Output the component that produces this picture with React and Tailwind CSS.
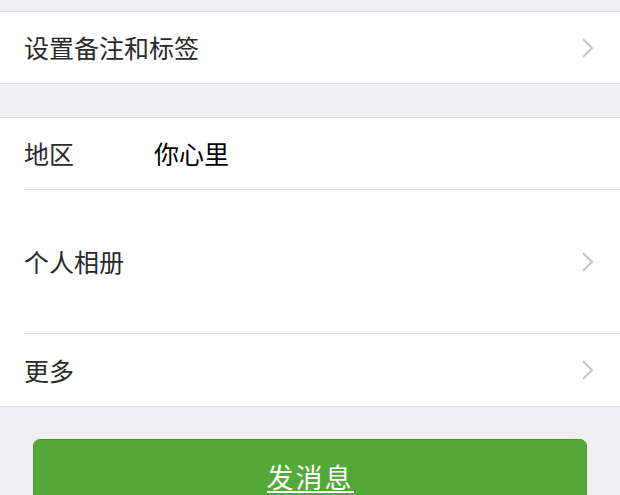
import React from "react";

function Chevron() {
  return (
    <svg width="16" height="22" viewBox="0 0 16 22" fill="none" className="shrink-0">
      <path d="M3 2l9 9-9 9" stroke="#c7c7cc" strokeWidth="2.2" />
    </svg>
  );
}

function Row({ label, value, arrow, tall, divider }) {
  return (
    <div className="pl-6">
      <div
        className={`flex items-center pr-6 ${tall ? "h-[144px]" : "h-[72px]"} ${
          divider ? "border-b border-[#dadadf]" : ""
        }`}
      >
        <span className="min-w-[130px] shrink-0 whitespace-nowrap text-[#2a2a2a]">{label}</span>
        <span className="flex-1 text-black">{value}</span>
        {arrow && <Chevron />}
      </div>
    </div>
  );
}

export default function App() {
  return (
    <div
      className="min-h-[495px] bg-[#efeff4] text-[25px] leading-none"
      style={{ fontFamily: '"Noto Sans CJK SC", "Liberation Sans", sans-serif' }}
    >
      <div className="h-[11px]" />
      <section className="bg-white border-y border-[#d9d9de]">
        <div className="pl-6">
          <div className="flex items-center pr-6 h-[71px]">
            <span className="flex-1 whitespace-nowrap text-[#2a2a2a]">设置备注和标签</span>
            <Chevron />
          </div>
        </div>
      </section>
      <div className="h-[33px]" />
      <section className="bg-white border-y border-[#d9d9de]">
        <Row label="地区" value="你心里" divider />
        <Row label="个人相册" arrow tall divider />
        <Row label="更多" arrow />
      </section>
      <div className="px-[33px] pt-[32px]">
        <button className="flex w-full h-[76px] justify-center items-start pt-[24px] rounded-[7px] bg-[#52a937] border border-[#45982f] text-white text-[27px]">
          <span className="block leading-[26px] tracking-[2px] pb-[1px] border-b-2 border-white">发消息</span>
        </button>
      </div>
    </div>
  );
}
